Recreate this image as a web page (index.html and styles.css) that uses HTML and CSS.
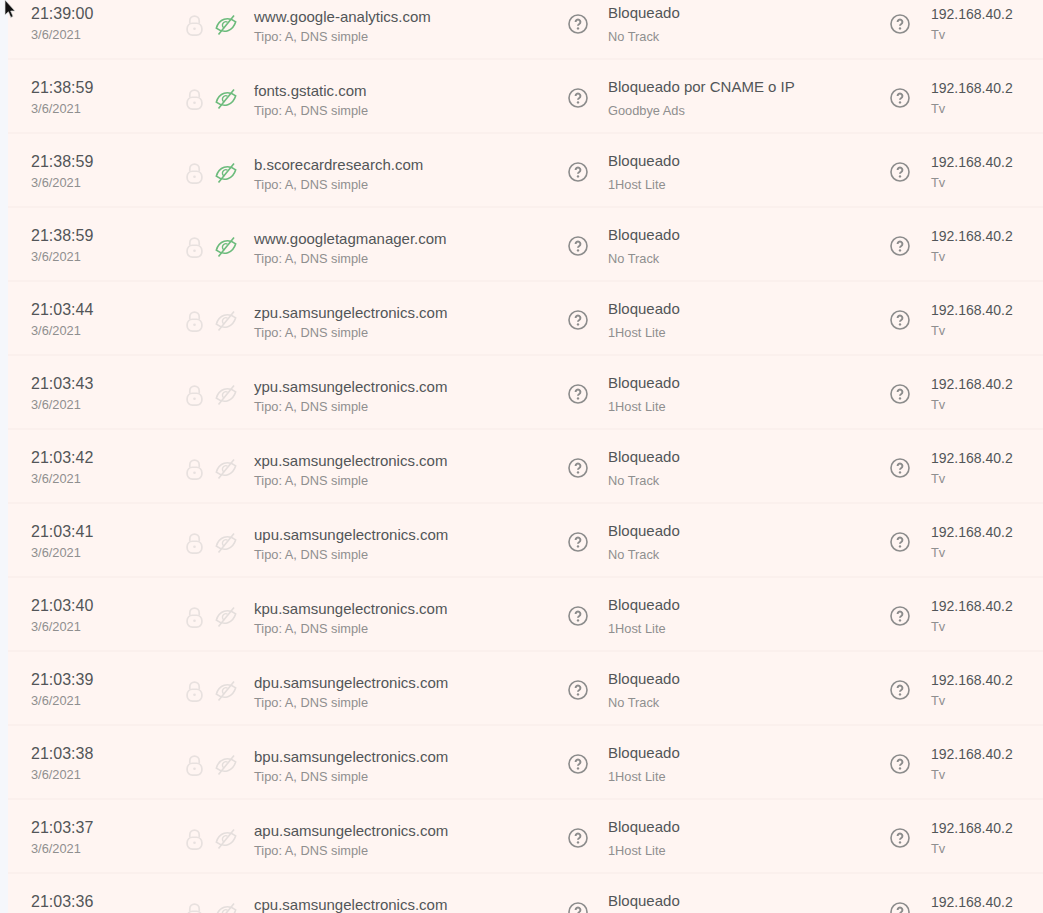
FILE: index.html
```html
<!DOCTYPE html>
<html lang="es">
<head>
<meta charset="utf-8">
<title>Registro de consultas</title>
<link rel="stylesheet" href="styles.css">
</head>
<body>
<svg width="0" height="0" class="defs">
  <defs>
    <symbol id="lock" viewBox="0 0 18 22">
      <path d="M4 9V6a5 5 0 0 1 10 0v3" fill="none" stroke="currentColor" stroke-width="1.8"/>
      <rect x="1.2" y="8.6" width="15.6" height="12.6" rx="5.5" fill="none" stroke="currentColor" stroke-width="1.8"/>
      <circle cx="9" cy="14.4" r="1.4" fill="currentColor"/>
    </symbol>
    <symbol id="eye" viewBox="0 0 22 20">
      <g transform="rotate(-18 11 10)">
        <path d="M.8 10C3.8 5.6 7.4 4 11 4s7.2 1.6 10.2 6c-3 4.400-6.600 6-10.200 6s-7.200-1.600-10.200-6z" fill="none" stroke="currentColor" stroke-width="1.600"/>
        <path d="M8.400 12.400a3.300 3.300 0 0 1 4.900-4.700" fill="none" stroke="currentColor" stroke-width="1.500"/>
      </g>
      <path d="M3.500 19.500L19 .5" fill="none" stroke="currentColor" stroke-width="1.600"/>
    </symbol>
    <symbol id="help" viewBox="0 0 20 20">
      <circle cx="10" cy="10" r="9" fill="none" stroke="currentColor" stroke-width="1.6"/>
      <path d="M7.6 8a2.4 2.4 0 1 1 3.7 2c-.9.6-1.3 1-1.3 1.8" fill="none" stroke="currentColor" stroke-width="2"/>
      <circle cx="10" cy="14.4" r="1.2" fill="currentColor"/>
    </symbol>
  </defs>
</svg>
<svg class="cursor" width="12" height="19" viewBox="0 0 12 19"><path d="M1 0v15l3.4-3.2 2.4 5.6 2.3-1-2.4-5.4H11z" fill="#111" stroke="#ddd" stroke-width=".7"/></svg>
<main class="list" id="list"></main>
<script src="app.js"></script>
</body>
</html>
```
FILE: app.js
```js
var rows = [
  ["21:39:00", "www.google-analytics.com", "Bloqueado", "No Track", 1],
  ["21:38:59", "fonts.gstatic.com", "Bloqueado por CNAME o IP", "Goodbye Ads", 1],
  ["21:38:59", "b.scorecardresearch.com", "Bloqueado", "1Host Lite", 1],
  ["21:38:59", "www.googletagmanager.com", "Bloqueado", "No Track", 1],
  ["21:03:44", "zpu.samsungelectronics.com", "Bloqueado", "1Host Lite", 0],
  ["21:03:43", "ypu.samsungelectronics.com", "Bloqueado", "1Host Lite", 0],
  ["21:03:42", "xpu.samsungelectronics.com", "Bloqueado", "No Track", 0],
  ["21:03:41", "upu.samsungelectronics.com", "Bloqueado", "No Track", 0],
  ["21:03:40", "kpu.samsungelectronics.com", "Bloqueado", "1Host Lite", 0],
  ["21:03:39", "dpu.samsungelectronics.com", "Bloqueado", "No Track", 0],
  ["21:03:38", "bpu.samsungelectronics.com", "Bloqueado", "1Host Lite", 0],
  ["21:03:37", "apu.samsungelectronics.com", "Bloqueado", "1Host Lite", 0],
  ["21:03:36", "cpu.samsungelectronics.com", "Bloqueado", "No Track", 0]
];
function icon(name, cls) {
  return '<svg class="' + cls + '"><use href="#' + name + '"></use></svg>';
}
document.getElementById("list").innerHTML = rows.map(function (r) {
  return '<div class="row">' +
    '<div class="cell time"><div class="main-time">' + r[0] + '</div><div class="sub sub-time">3/6/2021</div></div>' +
    '<div class="cell icons">' + icon("lock", "lock") + icon("eye", r[4] ? "eye tracked" : "eye") + '</div>' +
    '<div class="cell domain"><div class="main-domain">' + r[1] + '</div><div class="sub sub-domain">Tipo: A, DNS simple</div></div>' +
    '<div class="cell help-cell first">' + icon("help", "help") + '</div>' +
    '<div class="cell status"><div class="main-status">' + r[2] + '</div><div class="sub sub-status">' + r[3] + '</div></div>' +
    '<div class="cell help-cell second">' + icon("help", "help") + '</div>' +
    '<div class="cell client"><div class="main-ip">192.168.40.2</div><div class="sub sub-ip">Tv</div></div>' +
    '</div>';
}).join("");
```
FILE: styles.css
```css
html, body {
  margin: 0;
  height: 100%;
  overflow: hidden;
  background: #f5f7fb;
  font-family: "Liberation Sans", Arial, sans-serif;
  color: #525558;
}
.defs { position: absolute; }
.cursor { position: absolute; left: 4px; top: 0; z-index: 2; }
.list { margin: -14px 0 0 8px; }
.row {
  display: grid;
  grid-template-columns: 169px 69px 304px 52px 270px 53px 1fr;
  height: 74px;
  box-sizing: border-box;
  background: #fff5f2;
  border-bottom: 2px solid #fbf0ed;
}
.cell { padding-left: 23px; min-width: 0; box-sizing: border-box; }
.sub { color: #8f8f8f; font-size: 12.8px; line-height: 16px; }
.main-time { font-size: 16px; line-height: 20px; padding-top: 18px; }
.sub-time { padding-top: 3px; }
.main-domain { font-size: 15px; line-height: 18px; padding-top: 22px; }
.sub-domain { padding-top: 3px; }
.main-status { font-size: 15px; line-height: 18px; padding-top: 18px; }
.sub-status { padding-top: 7px; }
.main-ip { font-size: 14px; line-height: 18px; padding-top: 19px; }
.sub-ip { padding-top: 4px; }
.icons { padding-left: 9px; display: flex; align-items: center; gap: 12px; padding-top: 6px; }
.lock { width: 17px; height: 21px; color: #e8e1df; }
.eye { width: 22px; height: 20px; color: #e4dedc; }
.eye.tracked { color: #6cbb7c; }
.domain { padding-left: 8px; }
.status { padding-left: 6px; }
.client { padding-left: 6px; }
.help-cell { padding-left: 0; padding-top: 4px; display: flex; align-items: center; justify-content: center; }
.help-cell.first { padding-left: 4px; }
.help-cell.second { padding-left: 2px; }
.help { width: 20px; height: 20px; color: #8c8c8c; }
```
